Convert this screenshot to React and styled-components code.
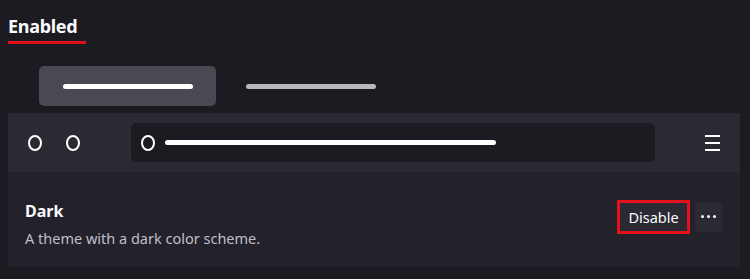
import React from "react";
import styled, { createGlobalStyle } from "styled-components";

const Global = createGlobalStyle`
  html, body { margin: 0; padding: 0; background: #1c1b22; }
  body { font-family: "Noto Sans", "Open Sans", sans-serif; color: #fbfbfe; }
  * { box-sizing: border-box; }
`;

const Page = styled.div`
  width: 750px;
  height: 279px;
  overflow: hidden;
  padding: 14px 10px 0 8px;
  background: #1c1b22;
`;

const Heading = styled.h2`
  display: inline-block;
  margin: 0;
  font-size: 18px;
  font-weight: 700;
  line-height: 24px;
  width: 78px;
  padding-bottom: 3px;
  border-bottom: 3px solid #e0101a;
  letter-spacing: -0.3px;
`;

const Tabs = styled.div`
  display: flex;
  gap: 6px;
  margin: 22px 0 7px 31px;
`;

const Tab = styled.div`
  width: 177px;
  height: 40px;
  border-radius: 5px;
  display: flex;
  align-items: center;
  padding-left: 24px;
  background: ${(p) => (p.$active ? "#4a4951" : "transparent")};
`;

const TabLine = styled.div`
  width: 130px;
  height: 5px;
  border-radius: 3px;
  background: ${(p) => (p.$active ? "#ffffff" : "#b8b7bd")};
`;

const Card = styled.div`
  width: 732px;
  background: #23222b;
`;

const Toolbar = styled.div`
  height: 59px;
  background: #2b2a33;
  display: flex;
  align-items: center;
  padding: 0 20px 0 20px;
`;

const Ring = styled.span`
  display: block;
  width: 14px;
  height: 16px;
  border: 2px solid #ffffff;
  border-radius: 50%;
  flex: none;
`;

const NavGroup = styled.div`
  display: flex;
  gap: 24px;
  margin-right: 51px;
`;

const UrlBar = styled.div`
  width: 524px;
  height: 39px;
  border-radius: 5px;
  background: #1c1b22;
  display: flex;
  align-items: center;
  padding-left: 10px;
  gap: 10px;
`;

const UrlLine = styled.div`
  width: 331px;
  height: 5px;
  border-radius: 3px;
  background: #ffffff;
`;

const Menu = styled.div`
  margin-left: auto;
  margin-right: 0;
  width: 15px;
  display: flex;
  flex-direction: column;
  gap: 5px;
  span {
    display: block;
    height: 2px;
    background: #ffffff;
  }
`;

const Addon = styled.div`
  height: 95px;
  display: flex;
  align-items: center;
  padding: 0 18px 0 17px;
`;

const Info = styled.div`
  flex: 1;
  display: flex;
  flex-direction: column;
  gap: 6px;
  padding-top: 8px;
`;

const Name = styled.div`
  font-size: 16px;
  font-weight: 700;
  line-height: 22px;
  color: #fbfbfe;
`;

const Desc = styled.div`
  font-size: 14.5px;
  line-height: 20px;
  color: #bfbfc9;
`;

const Actions = styled.div`
  display: flex;
  align-items: center;
  gap: 5px;
  margin-top: -6px;
`;

const DisableButton = styled.button`
  height: 34px;
  width: 73px;
  border: 3px solid #e4101c;
  background: #2b2a33;
  color: #fbfbfe;
  font-family: "Noto Sans", "Open Sans", sans-serif;
  font-size: 14.5px;
  padding: 0;
  border-radius: 0;
`;

const MoreButton = styled.button`
  height: 30px;
  width: 27px;
  border: none;
  border-radius: 4px;
  background: #2b2a33;
  color: #fbfbfe;
  display: flex;
  align-items: center;
  justify-content: center;
  gap: 3px;
  padding: 0;
  span {
    width: 3px;
    height: 3px;
    border-radius: 50%;
    background: #ffffff;
  }
`;

export default function App() {
  return (
    <Page>
      <Global />
      <Heading>Enabled</Heading>
      <Tabs>
        <Tab $active>
          <TabLine $active />
        </Tab>
        <Tab>
          <TabLine />
        </Tab>
      </Tabs>
      <Card>
        <Toolbar>
          <NavGroup>
            <Ring />
            <Ring />
          </NavGroup>
          <UrlBar>
            <Ring />
            <UrlLine />
          </UrlBar>
          <Menu>
            <span />
            <span />
            <span />
          </Menu>
        </Toolbar>
        <Addon>
          <Info>
            <Name>Dark</Name>
            <Desc>A theme with a dark color scheme.</Desc>
          </Info>
          <Actions>
            <DisableButton>Disable</DisableButton>
            <MoreButton>
              <span />
              <span />
              <span />
            </MoreButton>
          </Actions>
        </Addon>
      </Card>
    </Page>
  );
}
